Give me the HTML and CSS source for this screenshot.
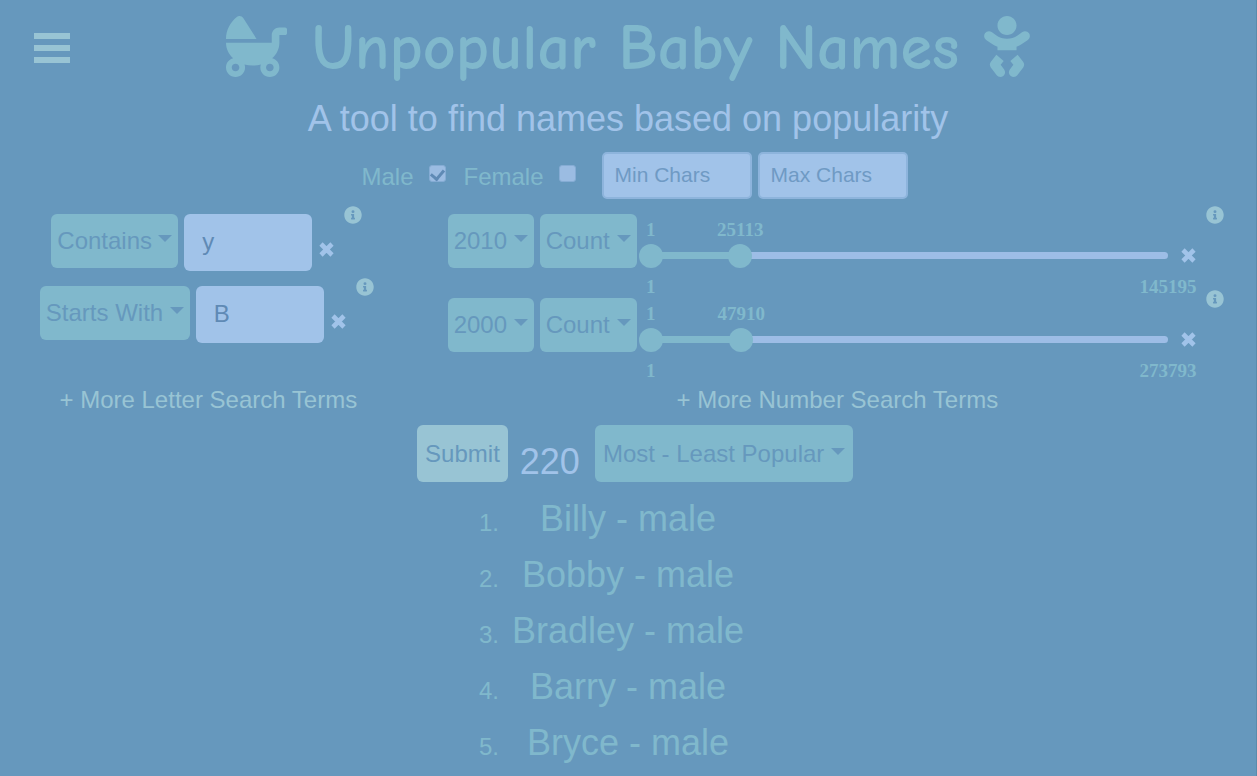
FILE: index.html
```html
<!DOCTYPE html>
<html lang="en">
<head>
<meta charset="utf-8">
<meta name="viewport" content="width=device-width, initial-scale=1">
<title>Unpopular Baby Names</title>
<link rel="stylesheet" href="styles.css">
</head>
<body>
<svg class="sprite" aria-hidden="true">
  <symbol id="times" viewBox="0 0 15 15"><path d="M2 2l11 11M13 2L2 13" stroke="currentColor" stroke-width="4.600"/></symbol>
  <symbol id="info" viewBox="0 0 512 512"><path fill="currentColor" d="M256 8C119 8 8 119 8 256s111 248 248 248 248-111 248-248S393 8 256 8zm0 110a42 42 0 1 1 0 84 42 42 0 0 1 0-84zm56 254c0 7-5 12-12 12h-88c-7 0-12-5-12-12v-24c0-7 5-12 12-12h12v-64h-12c-7 0-12-5-12-12v-24c0-7 5-12 12-12h64c7 0 12 5 12 12v100h12c7 0 12 5 12 12v24z"/></symbol>
</svg>
<header class="header">
  <button class="menu" type="button" aria-label="Menu"><span></span><span></span><span></span></button>
  <div class="brand">
    <svg class="carriage" viewBox="0 0 512 512" aria-hidden="true"><path fill="currentColor" d="M144.8 17c-11.3-17.8-37.2-22.8-54-9.4C35.3 51.9 0 118 0 192h256L144.8 17zM496 96h-48c-35.3 0-64 28.7-64 64v64H0c0 50.6 23 96.4 60.3 130.7C25.7 363.6 0 394.7 0 432c0 44.2 35.8 80 80 80s80-35.8 80-80c0-8.9-1.8-17.2-4.400-25.2 21.6 5.9 44.6 9.2 68.4 9.2s46.9-3.3 68.4-9.2c-2.700 8-4.400 16.3-4.400 25.2 0 44.2 35.8 80 80 80s80-35.8 80-80c0-37.3-25.700-68.400-60.300-77.300C425 320.400 448 274.600 448 224v-64h48c8.800 0 16-7.200 16-16v-32c0-8.800-7.200-16-16-16zM80 464c-17.600 0-32-14.400-32-32s14.400-32 32-32 32 14.400 32 32-14.400 32-32 32zm320-32c0 17.600-14.400 32-32 32s-32-14.400-32-32 14.400-32 32-32 32 14.400 32 32z"/></svg>
    <h1 class="title">Unpopular Baby Names</h1>
    <svg class="baby" viewBox="0 0 384 512" aria-hidden="true"><path fill="currentColor" d="M192 160c44.2 0 80-35.8 80-80S236.2 0 192 0s-80 35.8-80 80 35.8 80 80 80zm-53.400 248.800l25.600-32-61.500-51.200L56.800 383c-11.400 14.200-11.700 34.400-.8 49l48 64c7.900 10.500 19.900 16 32 16 8.300 0 16.800-2.600 24-8 17.700-13.200 21.200-38.300 8-56l-29.400-39.200zm142.700-83.200l-61.500 51.200 25.600 32L216 448c-13.200 17.700-9.700 42.800 8 56 7.200 5.400 15.600 8 24 8 12.200 0 24.200-5.500 32-16l48-64c10.900-14.600 10.600-34.800-.8-49l-45.900-57.400zM376.700 145c-12.700-18.100-37.600-22.400-55.700-9.800l-40.600 28.500c-52.700 37-124.200 37-176.800 0L63 135.300C44.900 122.600 20 127 7.300 145c-12.700 18.100-8.300 43 9.700 55.700l40.600 28.500c17 11.900 35.400 20.900 54.400 27.900V288h160v-30.800c19-7 37.400-16 54.400-27.900l40.600-28.500c18.100-12.800 22.400-37.700 9.700-55.800z"/></svg>
  </div>
</header>
<main>
  <h2 class="tagline">A tool to find names based on popularity</h2>
  <form class="search">
    <div class="basics">
      <label class="check">Male <input type="checkbox" checked></label>
      <label class="check">Female <input type="checkbox"></label>
      <div class="limits">
        <input class="limit" type="text" placeholder="Min Chars" aria-label="Minimum characters">
        <input class="limit" type="text" placeholder="Max Chars" aria-label="Maximum characters">
      </div>
    </div>
    <div class="terms">
      <section class="letters">
        <div class="rows">
          <div class="letter-row">
            <span class="picker"><select aria-label="Letter rule 1"><option>Contains</option></select></span>
            <input class="letter" type="text" value="y" aria-label="Letters for rule 1">
            <button class="remove" type="button" aria-label="Remove"><svg><use href="#times"/></svg></button>
            <button class="help" type="button" aria-label="Help"><svg><use href="#info"/></svg></button>
          </div>
          <div class="letter-row">
            <span class="picker"><select aria-label="Letter rule 2"><option>Starts With</option></select></span>
            <input class="letter" type="text" value="B" aria-label="Letters for rule 2">
            <button class="remove" type="button" aria-label="Remove"><svg><use href="#times"/></svg></button>
            <button class="help" type="button" aria-label="Help"><svg><use href="#info"/></svg></button>
          </div>
        </div>
        <button class="more" type="button">+ More Letter Search Terms</button>
      </section>
      <section class="numbers">
        <div class="rows">
          <div class="number-row">
            <span class="picker"><select aria-label="Year 1"><option>2010</option></select></span>
            <span class="picker"><select aria-label="Measure 1"><option>Count</option></select></span>
            <div class="slider">
              <div class="scale"><output style="left: 0%">1</output><output style="left: 17.300%">25113</output></div>
              <div class="rail">
                <div class="track"><div class="fill" style="width: 17.300%"></div></div>
                <input type="range" min="1" max="145195" value="1" aria-label="Lowest count in 2010">
                <input type="range" min="1" max="145195" value="25113" aria-label="Highest count in 2010">
              </div>
              <div class="scale bounds"><span style="left: 0%">1</span><span style="left: 100%">145195</span></div>
            </div>
            <button class="remove" type="button" aria-label="Remove"><svg><use href="#times"/></svg></button>
            <button class="help" type="button" aria-label="Help"><svg><use href="#info"/></svg></button>
          </div>
          <div class="number-row">
            <span class="picker"><select aria-label="Year 2"><option>2000</option></select></span>
            <span class="picker"><select aria-label="Measure 2"><option>Count</option></select></span>
            <div class="slider">
              <div class="scale"><output style="left: 0%">1</output><output style="left: 17.500%">47910</output></div>
              <div class="rail">
                <div class="track"><div class="fill" style="width: 17.500%"></div></div>
                <input type="range" min="1" max="273793" value="1" aria-label="Lowest count in 2000">
                <input type="range" min="1" max="273793" value="47910" aria-label="Highest count in 2000">
              </div>
              <div class="scale bounds"><span style="left: 0%">1</span><span style="left: 100%">273793</span></div>
            </div>
            <button class="remove" type="button" aria-label="Remove"><svg><use href="#times"/></svg></button>
            <button class="help" type="button" aria-label="Help"><svg><use href="#info"/></svg></button>
          </div>
        </div>
        <button class="more" type="button">+ More Number Search Terms</button>
      </section>
    </div>
    <div class="actions">
      <button class="submit" type="submit">Submit</button>
      <output class="total">220</output>
      <span class="picker order"><select aria-label="Sort order"><option>Most - Least Popular</option></select></span>
    </div>
  </form>
  <ol class="results">
    <li><span class="rank">1.</span><span class="name">Billy - male</span></li>
    <li><span class="rank">2.</span><span class="name">Bobby - male</span></li>
    <li><span class="rank">3.</span><span class="name">Bradley - male</span></li>
    <li><span class="rank">4.</span><span class="name">Barry - male</span></li>
    <li><span class="rank">5.</span><span class="name">Bryce - male</span></li>
  </ol>
</main>
</body>
</html>
```
FILE: styles.css
```css
:root {
  --bg: #6698bd;
  --teal: #80b8cc;
  --mist: #98c4d4;
  --sky: #a1c3e9;
  --ink: #5f8ab5;
}

* { box-sizing: border-box; }

body {
  min-height: 100vh;
  margin: 0;
  border-right: 1px solid #5a8bab;
  background: var(--bg);
  color: var(--teal);
  font-family: "Liberation Sans", Arial, sans-serif;
  font-size: 24px;
  line-height: 28px;
}

button, input, select {
  margin: 0;
  border: 0;
  font: inherit;
  color: inherit;
}

button {
  padding: 0;
  background: none;
  cursor: pointer;
}

svg { display: block; }
.sprite { position: absolute; width: 0; height: 0; }

.header {
  display: grid;
  padding-top: 16px;
}
.header > * { grid-area: 1 / 1; }

.menu {
  display: grid;
  gap: 6px;
  width: 36px;
  margin: 17px 0 0 34px;
  align-self: start;
  z-index: 1;
}
.menu span { height: 6px; background: var(--mist); }

.brand {
  display: flex;
  justify-content: center;
  align-items: flex-start;
  gap: 25px;
  height: 76px;
}
.carriage { width: 61px; height: 61px; }
.baby { width: 46px; height: 61px; }
.title {
  margin: 0;
  font-family: "Comic Neue", Lato, sans-serif;
  font-size: 64px;
  font-weight: 700;
  line-height: 64px;
}

.tagline {
  margin: 5px 0 0;
  color: var(--sky);
  font-size: 36px;
  font-weight: 400;
  line-height: 44px;
  text-align: center;
}

.basics {
  display: flex;
  justify-content: center;
  align-items: center;
  gap: 18px;
  margin: 11px 0 0 13px;
}
.check {
  display: flex;
  align-items: center;
  gap: 15px;
  padding-top: 2px;
}
.check input {
  appearance: none;
  display: flex;
  justify-content: center;
  align-items: flex-start;
  width: 17px;
  height: 17px;
  margin-bottom: 6px;
  border: 1px solid #85acd4;
  border-radius: 3px;
  background: #9bbce2;
}
.check input:checked::before {
  content: "";
  width: 6px;
  height: 10px;
  margin-top: 1px;
  border: solid var(--ink);
  border-width: 0 3px 3px 0;
  transform: rotate(40deg);
}
.limits { display: flex; gap: 6px; margin-left: 8px; }
.limit {
  width: 150px;
  height: 47px;
  padding: 0 11px 2px;
  border: 2px solid #8db4dc;
  border-radius: 5px;
  background: var(--sky);
  font-size: 21px;
}
.limit::placeholder { color: #6f9ac4; opacity: 1; }

.terms {
  display: grid;
  grid-template-columns: 1fr 2fr;
  margin-top: 7px;
}
.letters, .numbers {
  display: flex;
  flex-direction: column;
  align-items: center;
}
.rows { flex: 1; width: 100%; }

.letter-row, .number-row {
  display: flex;
  align-items: flex-start;
}
.letter-row {
  justify-content: center;
  height: 72px;
  padding-right: 5px;
}
.number-row { height: 84px; padding: 0 32px 0 29px; }

.picker {
  position: relative;
  margin: 8px 6px 0 0;
}
.picker select {
  appearance: none;
  display: block;
  height: 54px;
  padding: 0 26px 0 6px;
  border-radius: 6px;
  background: var(--teal);
  color: var(--bg);
}
.picker::after {
  content: "";
  position: absolute;
  top: 21px;
  right: 6px;
  border: 7px solid transparent;
  border-top-color: var(--bg);
  border-bottom: 0;
  pointer-events: none;
}

.letter {
  width: 128px;
  height: 57px;
  margin-top: 8px;
  padding: 0 18px 1px;
  border-radius: 6px;
  background: var(--sky);
  color: var(--ink);
}
.remove { color: var(--sky); }
.remove svg { width: 15px; height: 15px; }
.help { color: var(--mist); }
.help svg { width: 18px; height: 18px; }
.letter-row .remove { margin: 36px 10px 0 7px; }
.number-row .remove { margin: 42px 10px 0 0; }

.slider {
  flex: 1;
  margin: 14px 1px 0 -4px;
  font-family: "Liberation Serif", "Times New Roman", serif;
  font-size: 19px;
  font-weight: 700;
  line-height: 20px;
}
.scale {
  position: relative;
  height: 24px;
  margin: 0 12px;
}
.scale > * {
  position: absolute;
  transform: translateX(-50%);
}
.bounds { padding-top: 9px; }
.rail { display: grid; align-items: center; }
.rail > * { grid-area: 1 / 1; }
.track {
  height: 7px;
  margin: 0 12px 2px;
  border-radius: 4px;
  background: #9dbde6;
}
.fill { height: 7px; background: var(--teal); }
.rail input {
  appearance: none;
  width: 100%;
  height: 24px;
  background: none;
  pointer-events: none;
}
.rail input::-webkit-slider-thumb {
  appearance: none;
  width: 24px;
  height: 24px;
  border-radius: 50%;
  background: var(--teal);
  pointer-events: auto;
}

.more {
  height: 28px;
  margin-top: 12px;
  color: var(--mist);
}
.letters .more { margin-right: 2px; }

.actions {
  display: flex;
  justify-content: center;
  margin: 11px 0 0 14px;
}
.submit {
  height: 57px;
  padding: 0 8px;
  border-radius: 6px;
  background: var(--mist);
  color: var(--bg);
}
.total {
  padding: 17px 15px 0 12px;
  color: var(--sky);
  font-size: 36px;
  line-height: 40px;
}
.order { margin: 0; }
.order select { height: 57px; padding: 0 28px 0 8px; }
.order::after { top: 23px; right: 8px; }

.results {
  width: 298px;
  margin: 9px auto 0;
  padding: 0;
  list-style: none;
}
.results li {
  display: grid;
  align-items: baseline;
  height: 56px;
  line-height: 56px;
}
.results li > * { grid-area: 1 / 1; }
.rank { justify-self: start; }
.name { justify-self: center; font-size: 36px; }
```
